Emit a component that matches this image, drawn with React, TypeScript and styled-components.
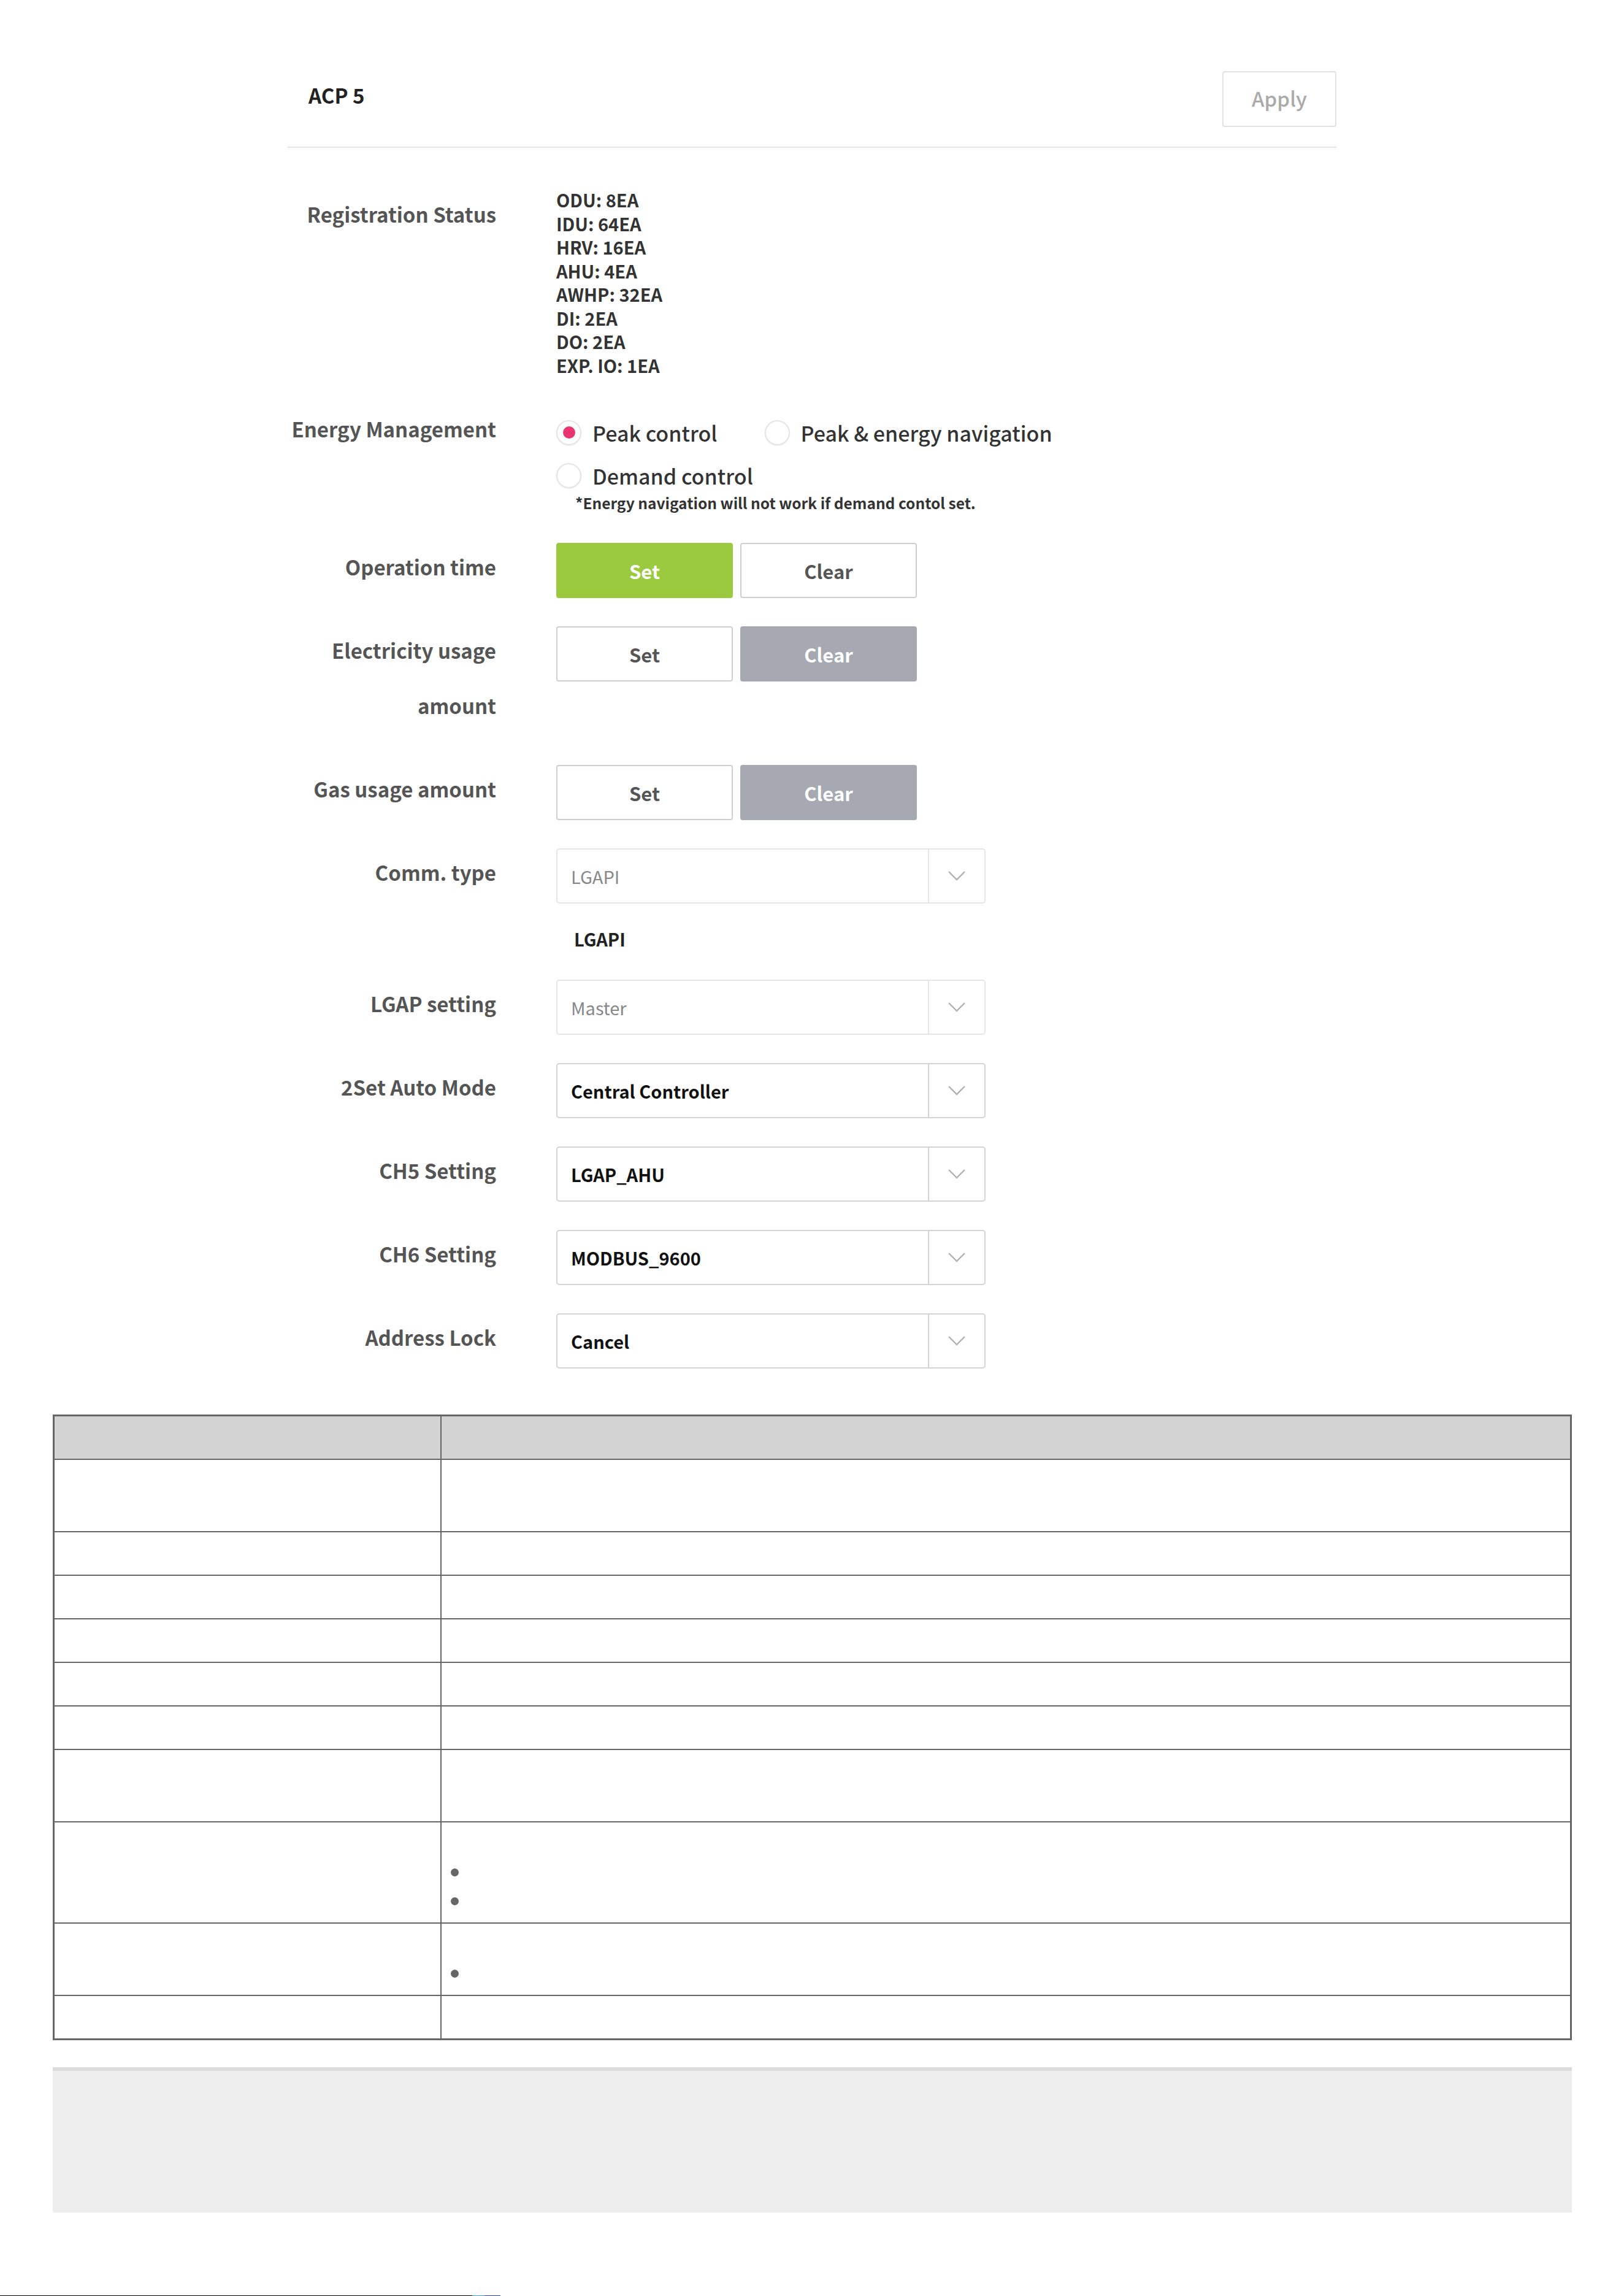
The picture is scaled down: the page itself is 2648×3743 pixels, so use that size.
import React from "react";
import styled, { createGlobalStyle } from "styled-components";

const GlobalStyle = createGlobalStyle`
  html, body {
    margin: 0;
    padding: 0;
    background: #ffffff;
  }
  body {
    font-family: "Noto Sans CJK KR", "Noto Sans", sans-serif;
    color: #333;
  }
`;

const Page = styled.div`
  width: 2648px;
  min-height: 3743px;
  display: flex;
  flex-direction: column;
  align-items: center;
`;

const Panel = styled.section`
  width: 1710px;
`;

const Header = styled.header`
  display: flex;
  align-items: center;
  justify-content: space-between;
  padding: 116px 0 32px 34px;
  border-bottom: 2px solid #e6e6e6;
`;

const Title = styled.h1`
  margin: 0 0 14px;
  font-size: 33px;
  font-weight: 600;
  color: #222;
`;

const ApplyButton = styled.button`
  width: 186px;
  height: 91px;
  padding: 0 0 4px;
  background: #fff;
  border: 2px solid #e2e2e2;
  border-radius: 4px;
  font-family: inherit;
  font-size: 33px;
  font-weight: 500;
  color: #aaa;
`;

const Form = styled.div`
  display: flex;
  flex-direction: column;
  gap: 46px;
  padding-top: 65px;
`;

const Row = styled.div`
  display: grid;
  grid-template-columns: 340px 1fr;
  column-gap: 98px;
  align-items: start;
`;

const Label = styled.div<{ $shift?: number }>`
  text-align: right;
  font-size: 33px;
  font-weight: 600;
  line-height: 90px;
  color: #555;
  margin-top: ${(p) => p.$shift ?? -6}px;
  margin-bottom: ${(p) => -(p.$shift ?? -6)}px;
`;

const Value = styled.div`
  display: flex;
  flex-direction: column;
  align-items: flex-start;
`;

const StatusList = styled.div`
  font-size: 29px;
  font-weight: 700;
  line-height: 38.5px;
  color: #333;
`;

const RadioGroup = styled.div`
  display: flex;
  flex-direction: column;
  gap: 10px;
  padding-top: 15px;
`;

const RadioLine = styled.div`
  display: flex;
  align-items: center;
  gap: 77px;
  height: 60px;
`;

const RadioItem = styled.label`
  display: flex;
  align-items: center;
  gap: 18px;
  font-size: 34px;
  font-weight: 500;
  color: #333;
`;

const RadioDot = styled.span<{ $checked?: boolean }>`
  width: 41px;
  height: 41px;
  box-sizing: border-box;
  border-radius: 50%;
  border: 2px solid #e4e4e4;
  box-shadow: 0 1px 2px rgba(0, 0, 0, 0.06);
  display: flex;
  align-items: center;
  justify-content: center;
  &::after {
    content: "";
    width: 20px;
    height: 20px;
    border-radius: 50%;
    background: ${(p) => (p.$checked ? "#e8346f" : "transparent")};
  }
`;

const Note = styled.div`
  font-size: 24.5px;
  font-weight: 700;
  line-height: 30px;
  color: #333;
  padding: 0 0 4px 31px;
`;

const ButtonPair = styled.div`
  display: flex;
  gap: 12px;
`;

const ActionButton = styled.button<{ $variant: "green" | "gray" | "plain" }>`
  width: 288px;
  height: 90px;
  box-sizing: border-box;
  border-radius: 4px;
  font-family: inherit;
  font-size: 31px;
  font-weight: 700;
  border: 2px solid
    ${(p) =>
      p.$variant === "green" ? "#9bca3e" : p.$variant === "gray" ? "#a6a8b2" : "#cfcfcf"};
  background: ${(p) =>
    p.$variant === "green" ? "#9bca3e" : p.$variant === "gray" ? "#a6a8b2" : "#fff"};
  color: ${(p) => (p.$variant === "plain" ? "#555" : "#fff")};
`;

const Select = styled.div<{ $disabled?: boolean }>`
  width: 700px;
  height: 90px;
  box-sizing: border-box;
  display: flex;
  border: 2px solid ${(p) => (p.$disabled ? "#e6e6e6" : "#d4d4d4")};
  border-radius: 5px;
  background: #fff;
`;

const SelectText = styled.div<{ $disabled?: boolean }>`
  flex: 1;
  display: flex;
  align-items: center;
  padding-left: 22px;
  font-size: 29px;
  font-weight: ${(p) => (p.$disabled ? 400 : 600)};
  color: ${(p) => (p.$disabled ? "#888" : "#111")};
`;

const ArrowCell = styled.div<{ $disabled?: boolean }>`
  width: 90px;
  display: flex;
  align-items: center;
  justify-content: center;
  border-left: 2px solid ${(p) => (p.$disabled ? "#e6e6e6" : "#d4d4d4")};
`;

const SubValue = styled.div`
  font-size: 29px;
  font-weight: 700;
  line-height: 38px;
  color: #222;
  padding: 38px 0 2px 29px;
`;

const InfoTable = styled.table`
  width: 2477px;
  margin-top: 75px;
  border-collapse: collapse;
  border: 3px solid #666;
`;

const HeadCell = styled.th<{ $width?: number }>`
  background: #d3d3d3;
  border: 2px solid #666;
  height: 69px;
  padding: 0;
  width: ${(p) => (p.$width ? `${p.$width}px` : "auto")};
`;

const Cell = styled.td`
  border: 2px solid #666;
  padding: 11px 12px;
  vertical-align: top;
`;

const CellLine = styled.div`
  height: 47px;
  display: flex;
  align-items: center;
`;

const Bullet = styled.span`
  width: 13px;
  height: 13px;
  border-radius: 50%;
  background: #666;
  margin-left: 3px;
`;

const NoteBox = styled.div`
  width: 2477px;
  height: 231px;
  margin-top: 44px;
  background: #ededed;
  border-top: 6px solid #dcdcdc;
`;

const BottomRule = styled.div`
  align-self: flex-start;
  margin-top: auto;
  width: 816px;
  height: 1px;
  background: linear-gradient(to right, #000 0 770px, #35a0c8 770px 790px, #2a3cb0 790px);
`;

const Chevron = () => (
  <svg width="30" height="18" viewBox="0 0 30 18" fill="none">
    <polyline points="2,2 15,15 28,2" stroke="#b0b0b0" strokeWidth="2.4" />
  </svg>
);

const Dropdown = ({ value, disabled }: { value: string; disabled?: boolean }) => (
  <Select $disabled={disabled}>
    <SelectText $disabled={disabled}>{value}</SelectText>
    <ArrowCell $disabled={disabled}>
      <Chevron />
    </ArrowCell>
  </Select>
);

const registration = [
  "ODU: 8EA",
  "IDU: 64EA",
  "HRV: 16EA",
  "AHU: 4EA",
  "AWHP: 32EA",
  "DI: 2EA",
  "DO: 2EA",
  "EXP. IO: 1EA",
];

// each row: number of text lines in the description cell, and which lines carry a bullet
const tableRows: { lines: number; bullets?: number[] }[] = [
  { lines: 2 },
  { lines: 1 },
  { lines: 1 },
  { lines: 1 },
  { lines: 1 },
  { lines: 1 },
  { lines: 2 },
  { lines: 3, bullets: [1, 2] },
  { lines: 2, bullets: [1] },
  { lines: 1 },
];

export default function App() {
  return (
    <>
      <GlobalStyle />
      <Page>
        <Panel>
          <Header>
            <Title>ACP 5</Title>
            <ApplyButton>Apply</ApplyButton>
          </Header>
          <Form>
            <Row>
              <Label $shift={-2}>Registration Status</Label>
              <Value>
                <StatusList>
                  {registration.map((r) => (
                    <div key={r}>{r}</div>
                  ))}
                </StatusList>
              </Value>
            </Row>
            <Row>
              <Label>Energy Management</Label>
              <Value>
                <RadioGroup>
                  <RadioLine>
                    <RadioItem>
                      <RadioDot $checked />
                      Peak control
                    </RadioItem>
                    <RadioItem>
                      <RadioDot />
                      Peak &amp; energy navigation
                    </RadioItem>
                  </RadioLine>
                  <RadioLine>
                    <RadioItem>
                      <RadioDot />
                      Demand control
                    </RadioItem>
                  </RadioLine>
                </RadioGroup>
                <Note>*Energy navigation will not work if demand contol set.</Note>
              </Value>
            </Row>
            <Row>
              <Label>Operation time</Label>
              <ButtonPair>
                <ActionButton $variant="green">Set</ActionButton>
                <ActionButton $variant="plain">Clear</ActionButton>
              </ButtonPair>
            </Row>
            <Row>
              <Label>
                Electricity usage
                <br />
                amount
              </Label>
              <ButtonPair>
                <ActionButton $variant="plain">Set</ActionButton>
                <ActionButton $variant="gray">Clear</ActionButton>
              </ButtonPair>
            </Row>
            <Row>
              <Label>Gas usage amount</Label>
              <ButtonPair>
                <ActionButton $variant="plain">Set</ActionButton>
                <ActionButton $variant="gray">Clear</ActionButton>
              </ButtonPair>
            </Row>
            <Row>
              <Label>Comm. type</Label>
              <Value>
                <Dropdown value="LGAPI" disabled />
                <SubValue>LGAPI</SubValue>
              </Value>
            </Row>
            <Row>
              <Label>LGAP setting</Label>
              <Dropdown value="Master" disabled />
            </Row>
            <Row>
              <Label>2Set Auto Mode</Label>
              <Dropdown value="Central Controller" />
            </Row>
            <Row>
              <Label>CH5 Setting</Label>
              <Dropdown value="LGAP_AHU" />
            </Row>
            <Row>
              <Label>CH6 Setting</Label>
              <Dropdown value="MODBUS_9600" />
            </Row>
            <Row>
              <Label>Address Lock</Label>
              <Dropdown value="Cancel" />
            </Row>
          </Form>
        </Panel>

        <InfoTable>
          <thead>
            <tr>
              <HeadCell $width={629} />
              <HeadCell />
            </tr>
          </thead>
          <tbody>
            {tableRows.map((row, i) => (
              <tr key={i}>
                <Cell>
                  {Array.from({ length: row.lines }).map((_, j) => (
                    <CellLine key={j} />
                  ))}
                </Cell>
                <Cell>
                  {Array.from({ length: row.lines }).map((_, j) => (
                    <CellLine key={j}>{row.bullets?.includes(j) && <Bullet />}</CellLine>
                  ))}
                </Cell>
              </tr>
            ))}
          </tbody>
        </InfoTable>

        <NoteBox />
        <BottomRule />
      </Page>
    </>
  );
}
